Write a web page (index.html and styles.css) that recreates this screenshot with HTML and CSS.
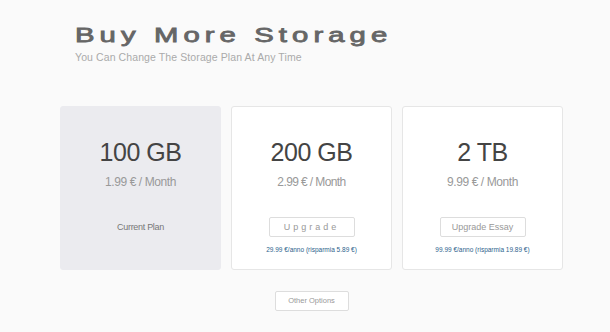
FILE: index.html
```html
<!DOCTYPE html>
<html>
<head>
<meta charset="utf-8">
<title>Buy More Storage</title>
<link rel="stylesheet" href="styles.css">
</head>
<body>

<div class="page">
	<div class="head">
		<h1 class="head-title">Buy More Storage</h1>
		<p class="head-sub">You Can Change The Storage Plan At Any Time</p>
	</div>

	<ul class="plans">
		<li class="plan current">
			<p class="plan-size">100 GB</p>
			<p class="plan-price">1.99 € / Month</p>
			<p class="plan-now">Current Plan</p>
		</li>
		<li class="plan">
			<p class="plan-size">200 GB</p>
			<p class="plan-price narrow">2.99 € / Month</p>
			<a class="btn wide">Upgrade</a>
			<p class="plan-year">29.99 €/anno (risparmia 5.89 €)</p>
		</li>
		<li class="plan">
			<p class="plan-size">2 TB</p>
			<p class="plan-price">9.99 € / Month</p>
			<a class="btn">Upgrade Essay</a>
			<p class="plan-year">99.99 €/anno (risparmia 19.89 €)</p>
		</li>
	</ul>

	<div class="more">
		<a class="btn small">Other Options</a>
	</div>
</div>

</body>
</html>
```

FILE: styles.css
```css
*{
	margin: 0;
	padding: 0;
}
body {
	background: #fafafa;
	font-family: "Liberation Sans", Arial, sans-serif;
}
.page {
	padding: 23px 0 0 60px;
	width: 503px;
}
.head {
	padding-left: 15px;
}
.head-title {
	display: inline-block;
	font-size: 19.5px;
	line-height: 24px;
	font-weight: normal;
	color: #666;
	letter-spacing: 3.4px;
	-webkit-text-stroke: 0.8px #666;
	transform: scaleX(1.5);
	transform-origin: 0 50%;
}
.head-sub {
	margin-top: 4px;
	font-size: 10.5px;
	line-height: 12px;
	color: #aaa;
	letter-spacing: 0.1px;
}
.plans {
	display: flex;
	gap: 10px;
	margin-top: 43px;
	list-style: none;
}
.plan {
	display: flex;
	flex-direction: column;
	align-items: center;
	width: 161px;
	height: 164px;
	box-sizing: border-box;
	padding-top: 30px;
	background: #fff;
	border: 1px solid #e6e6e6;
	border-radius: 3px;
}
.plan.current {
	background: #ebebef;
	border-color: #ebebef;
}
.plan-size {
	font-size: 25px;
	line-height: 30px;
	color: #444;
	letter-spacing: -0.5px;
}
.plan-price {
	margin-top: 7px;
	font-size: 12px;
	line-height: 16px;
	color: #999;
	letter-spacing: -0.4px;
}
.plan-price.narrow {
	letter-spacing: -0.6px;
}
.plan-now {
	margin-top: 31px;
	font-size: 9px;
	line-height: 12px;
	color: #777;
	letter-spacing: -0.3px;
}
.btn {
	display: block;
	box-sizing: border-box;
	width: 86px;
	height: 20px;
	margin-top: 27px;
	border: 1px solid #ddd;
	border-radius: 2px;
	background: #fff;
	font-size: 9px;
	line-height: 18px;
	text-align: center;
	color: #999;
}
.btn.wide {
	letter-spacing: 3px;
}
.btn.small {
	width: 74px;
	margin-top: 0;
	font-size: 7.5px;
}
.plan-year {
	margin-top: 9px;
	font-size: 6.5px;
	line-height: 8px;
	color: #2d5f8c;
}
.more {
	display: flex;
	justify-content: center;
	margin-top: 21px;
}
```
